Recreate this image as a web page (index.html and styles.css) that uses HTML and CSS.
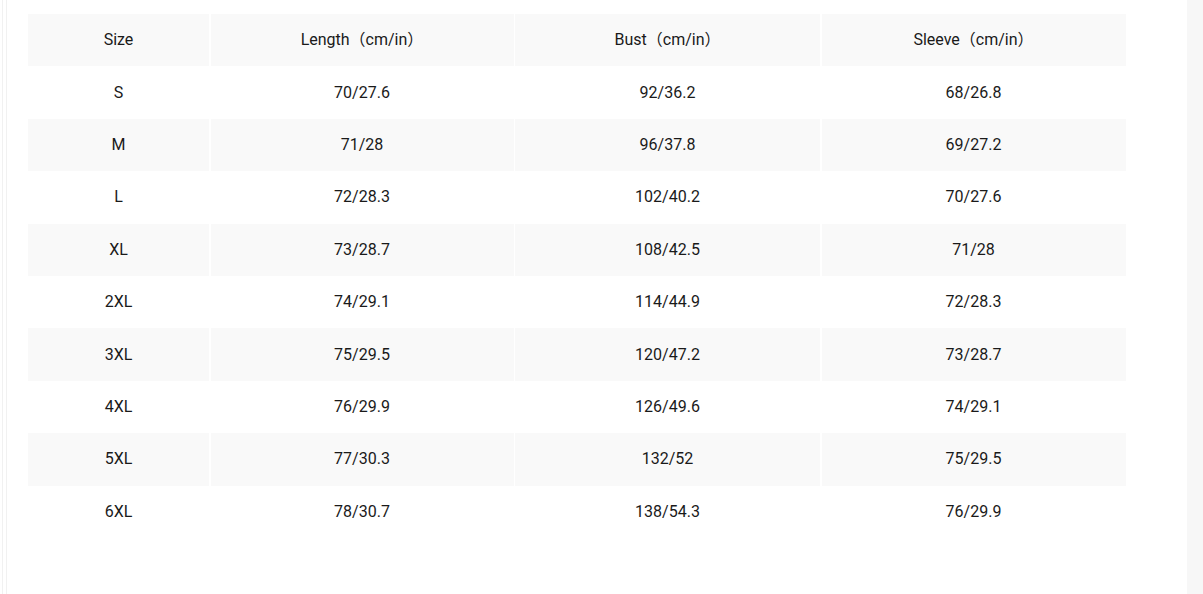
FILE: index.html
```html
<!DOCTYPE html>
<html>
<head>
<meta charset="utf-8">
<link rel="stylesheet" href="styles.css">
</head>
<body>
<div class="page">
  <div class="edge-left"></div>
  <main class="content">
    <div class="chart">
      <div class="row shade"><div class="cell">Size</div><div class="cell">Length（cm/in）</div><div class="cell">Bust（cm/in）</div><div class="cell">Sleeve（cm/in）</div></div>
      <div class="row"><div class="cell">S</div><div class="cell">70/27.6</div><div class="cell">92/36.2</div><div class="cell">68/26.8</div></div>
      <div class="row shade"><div class="cell">M</div><div class="cell">71/28</div><div class="cell">96/37.8</div><div class="cell">69/27.2</div></div>
      <div class="row"><div class="cell">L</div><div class="cell">72/28.3</div><div class="cell">102/40.2</div><div class="cell">70/27.6</div></div>
      <div class="row shade"><div class="cell">XL</div><div class="cell">73/28.7</div><div class="cell">108/42.5</div><div class="cell">71/28</div></div>
      <div class="row"><div class="cell">2XL</div><div class="cell">74/29.1</div><div class="cell">114/44.9</div><div class="cell">72/28.3</div></div>
      <div class="row shade"><div class="cell">3XL</div><div class="cell">75/29.5</div><div class="cell">120/47.2</div><div class="cell">73/28.7</div></div>
      <div class="row"><div class="cell">4XL</div><div class="cell">76/29.9</div><div class="cell">126/49.6</div><div class="cell">74/29.1</div></div>
      <div class="row shade"><div class="cell">5XL</div><div class="cell">77/30.3</div><div class="cell">132/52</div><div class="cell">75/29.5</div></div>
      <div class="row"><div class="cell">6XL</div><div class="cell">78/30.7</div><div class="cell">138/54.3</div><div class="cell">76/29.9</div></div>
    </div>
  </main>
  <div class="edge-right"></div>
</div>
</body>
</html>
```
FILE: styles.css
```css
html, body {
  margin: 0;
  padding: 0;
  background: #ffffff;
}
body {
  font-family: Roboto, "Noto Sans CJK SC", sans-serif;
  color: #1a1a1a;
  font-size: 16px;
}
.page {
  display: flex;
  width: 1203px;
  height: 594px;
  overflow: hidden;
}
.edge-left {
  width: 3px;
  margin-left: 2px;
  border-left: 1px solid #f1f1f1;
  border-right: 1px solid #f1f1f1;
  flex: none;
}
.content {
  flex: 1;
  padding: 14px 0 0 21px;
}
.chart {
  display: flex;
  flex-direction: column;
  width: 1098px;
}
.row {
  display: grid;
  grid-template-columns: 181px 303px 305px 304px;
  column-gap: 1.5px;
  height: 52.4px;
}
.cell {
  display: flex;
  align-items: center;
  justify-content: center;
  line-height: 1;
}
.shade .cell {
  background: #f9f9f9;
}
.edge-right {
  width: 16px;
  flex: none;
  background: #f7f7f7;
}
```
